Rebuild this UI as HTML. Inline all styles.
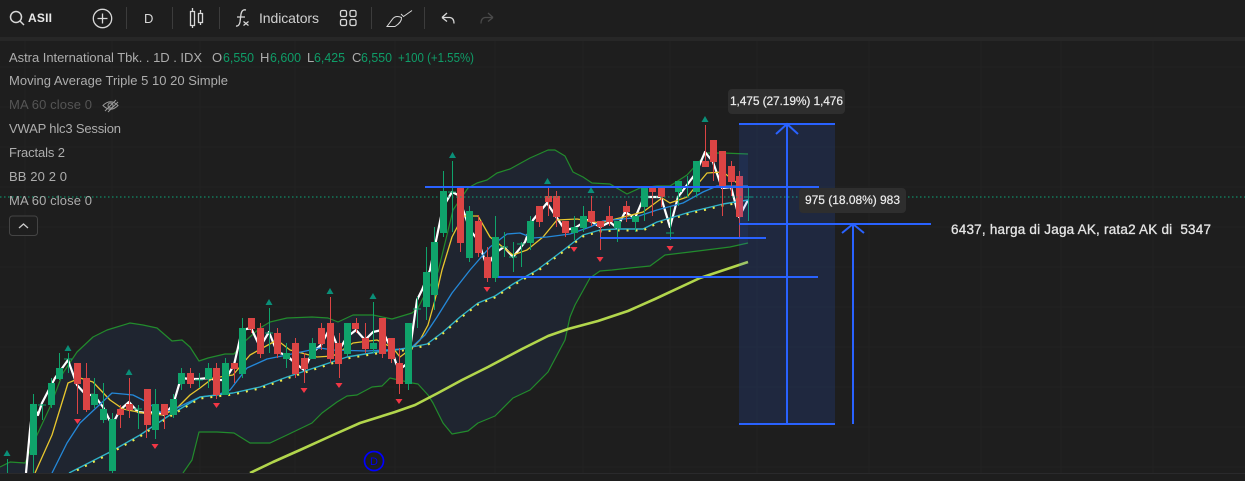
<!DOCTYPE html>
<html><head><meta charset="utf-8"><style>
html,body{margin:0;padding:0;background:#1e1e1e}
body{width:1245px;height:481px;overflow:hidden;position:relative;font-family:"Liberation Sans",sans-serif}
svg{position:absolute;left:0;top:0}
text{font-family:"Liberation Sans",sans-serif;white-space:pre}
.l{font-size:13px;fill:#adadad}
</style></head><body>
<svg width="1245" height="481" viewBox="0 0 1245 481">
<defs><clipPath id="c"><rect x="0" y="42" width="1245" height="431"/></clipPath></defs>
<rect width="1245" height="481" fill="#1e1e1e"/>
<rect y="37" width="1245" height="4" fill="#272727"/>
<path d="M25 41V473M112 41V473M200 41V473M295 41V473M395 41V473M495 41V473M583 41V473M670 41V473M757 41V473M869 41V473M981 41V473M1061 41V473M1153 41V473M0 67H1245M0 107H1245M0 147H1245M0 187H1245M0 227H1245M0 267H1245M0 307H1245M0 347H1245M0 387H1245M0 427H1245M0 467H1245" stroke="#222" fill="none"/>
<rect y="473" width="1245" height="1" fill="#2a2a2c"/>
<g clip-path="url(#c)">
<path fill="#1f2530" d="M0 467L10 462L25 463L37 435L50 407L63 373L77 352L93 337L107 330L130 323L143 325L157 328L172 341L182 340L190 347L199 361L208 358L225 354L234 354L243 343L260 328L270 322L287 318L312 317L328 318L338 322L353 315L373 315L392 319L412 313L418 308L423 298L438 272L453 210L468 188L477 183L487 180L497 173L510 169L530 158L548 150L555 150L565 156L573 172L583 177L592 183L610 184L627 194L640 188L657 186L670 186L687 175L707 153L723 153L748 154L748 243L730 247L690 252L665 255L650 266L630 268L612 270L600 271L590 278L575 305L570 317L565 340L548 372L530 390L513 398L495 416L478 423L468 431L452 434L443 423L433 403L428 395L418 384L412 383L390 378L382 386L372 387L357 395L347 396L337 402L322 413L312 423L287 435L270 443L260 443L250 443L234 433L217 432L199 432L192 460L183 473L0 473Z"/>
<g fill="none" stroke-linejoin="round">
<path stroke="#228b2c" stroke-width="1.2" d="M0 467L10 462L25 463L37 435L50 407L63 373L77 352L93 337L107 330L130 323L143 325L157 328L172 341L182 340L190 347L199 361L208 358L225 354L234 354L243 343L260 328L270 322L287 318L312 317L328 318L338 322L353 315L373 315L392 319L412 313L418 308L423 298L438 272L453 210L468 188L477 183L487 180L497 173L510 169L530 158L548 150L555 150L565 156L573 172L583 177L592 183L610 184L627 194L640 188L657 186L670 186L687 175L707 153L723 153L748 154"/>
<path stroke="#228b2c" stroke-width="1.2" d="M183 473L192 460L199 432L217 432L234 433L250 443L260 443L270 443L287 435L312 423L322 413L337 402L347 396L357 395L372 387L382 386L390 378L412 383L418 384L428 395L433 403L443 423L452 434L468 431L478 423L495 416L513 398L530 390L548 372L565 340L570 317L575 305L590 278L600 271L612 270L630 268L650 266L665 255L690 252L730 247L748 243"/>
<path stroke="#b2d64c" stroke-width="2.6" d="M250 473L273 462L300 450L333 435L360 423L395 412L415 405L438 393L462 380L488 367L522 349L548 336L568 329L598 321L628 311L655 299L700 278L748 262"/>
<path stroke="#fff" stroke-width="2.2" d="M26 473L30 430L33 405L38 415L42 403L55 378L68 360L77 385L86 395L94 395L103 407L112 425L120 410L129 402L138 412L147 413L155 412L164 415L173 405L181 378L190 379L199 379L208 378L216 380L225 380L234 365L242 330L251 328L260 347L269 332L277 352L286 355L295 363L304 370L312 353L321 345L330 328L339 350L347 337L356 330L365 340L373 332L382 330L391 348L396 363L399 370L408 363L417 300L422 290L430 270L443 207L452 192L458 195L470 230L478 240L487 267L495 253L504 247L513 257L525 242L533 220L547 203L557 218L565 230L575 228L587 220L592 222L600 227L610 222L617 228L625 212L635 218L644 197L661 197L670 227L678 197L696 173L705 152L713 162L722 188L731 187L739 217L748 200"/>
<path stroke="#e8c72e" stroke-width="1.3" d="M35 473L52 435L68 383L80 378L93 382L110 400L123 409L143 413L163 415L177 408L190 395L200 388L213 378L233 375L250 355L277 340L290 350L317 357L333 356L353 343L377 340L393 348L400 357L412 348L420 340L428 325L435 300L442 270L452 237L463 216L478 216L490 237L513 255L527 250L543 237L557 220L577 219L600 223L643 212L662 198L670 203L687 197L707 173L723 172L737 183"/>
<path stroke="#2488d8" stroke-width="1.3" d="M52 473L67 443L80 423L112 393L133 395L147 402L160 412L173 410L187 403L200 397L217 395L230 390L247 368L267 359L287 355L320 348L333 350L367 351L400 349L412 347L425 335L437 317L452 293L470 270L490 247L507 234L520 233L533 238L547 237L570 234L590 227L603 221L633 218L657 210L683 203L703 192L717 186L748 186"/>
<path stroke="#2fb2c9" stroke-width="1.4" d="M69 473L110 452L140 435L170 415L200 397L233 393L260 387L287 377L320 366L347 357L377 352L403 349L412 347L427 344L443 332L460 317L478 303L495 296L513 284L537 270L557 255L583 235L600 230L617 229L643 229L657 222L690 212L723 204L748 200"/>
<path stroke="#f2ec4a" stroke-width="2" stroke-dasharray="2 7" transform="translate(0 1.5)" d="M69 473L110 452L140 435L170 415L200 397L233 393L260 387L287 377L320 366L347 357L377 352L403 349L412 347L427 344L443 332L460 317L478 303L495 296L513 284L537 270L557 255L583 235L600 230L617 229L643 229L657 222L690 212L723 204L748 200"/>
</g>
<path stroke="#0fa36b" fill="none" d="M7.5 459V473M33.5 394V473M42.5 404V420M38 405H46M51.5 378V408M59.5 353V380M68.5 353V373M64 359H72M94.5 378V408M103.5 383V423M112.5 413V473M138.5 405V429M134 409H142M155.5 389V439M173.5 394V418M181.5 368V390M199.5 373V388M195 380H203M208.5 363V388M225.5 358V395M242.5 318V378M269.5 308V353M265 333H273M286.5 343V368M312.5 338V359M347.5 323V356M373.5 302V353M408.5 323V390M417.5 297V328M413 309H421M426.5 247V320M434.5 227V310M443.5 171V237M452.5 161V232M448 192H456M469.5 206V262M495.5 216V282M504.5 232V257M500 247H508M513.5 242V272M509 257H517M521.5 242V267M517 244H525M530.5 216V250M574.5 216V240M583.5 206V232M617.5 221V242M635.5 216V232M644.5 186V221M670.5 207V240M666 233H674M678.5 181V206M687.5 176V197M683 187H691M696.5 161V197M748.5 186V221M744 197H753"/>
<path stroke="#db4444" fill="none" d="M77.5 363V414M86.5 363V412M120.5 405V428M129.5 378V418M146.5 389V438M164.5 404V429M190.5 368V388M216.5 363V399M234.5 363V383M251.5 318V333M260.5 323V358M277.5 328V358M295.5 338V378M304.5 353V383M321.5 323V350M330.5 297V363M339.5 333V378M356.5 318V333M365.5 323V353M382.5 318V358M391.5 338V363M399.5 348V394M460.5 186V252M478.5 215V257M487.5 247V282M539.5 206V227M548.5 186V216M556.5 191V227M565.5 221V237M591.5 196V226M600.5 221V250M609.5 206V226M626.5 201V222M652.5 186V216M661.5 186V207M705.5 125V167M713.5 140V181M722.5 151V216M731.5 161V196M739.5 171V237"/>
<path fill="#0fa36b" d="M30 404h7v51h-7zM48 383h7v22h-7zM56 368h7v11h-7zM91 394h7v11h-7zM100 409h7v11h-7zM109 419h7v52h-7zM152 404h7v26h-7zM170 399h7v16h-7zM178 373h7v11h-7zM205 368h7v11h-7zM222 363h7v32h-7zM239 328h7v46h-7zM283 353h7v6h-7zM309 343h7v16h-7zM344 323h7v31h-7zM370 343h7v6h-7zM405 323h7v61h-7zM423 272h7v35h-7zM431 242h7v53h-7zM440 191h7v42h-7zM466 211h7v47h-7zM492 237h7v41h-7zM527 221h7v22h-7zM571 227h7v6h-7zM580 216h7v12h-7zM614 221h7v7h-7zM632 216h7v6h-7zM641 186h7v21h-7zM675 181h7v11h-7zM693 161h7v31h-7z"/>
<path fill="#db4444" d="M74 363h7v21h-7zM83 378h7v32h-7zM117 409h7v6h-7zM126 404h7v6h-7zM144 389h7v36h-7zM161 404h7v11h-7zM187 373h7v11h-7zM213 368h7v27h-7zM231 363h7v6h-7zM248 318h7v11h-7zM257 328h7v26h-7zM274 333h7v21h-7zM292 343h7v31h-7zM301 358h7v11h-7zM318 328h7v16h-7zM327 323h7v36h-7zM335 343h7v21h-7zM352 323h7v6h-7zM362 338h7v11h-7zM379 318h7v36h-7zM388 338h7v21h-7zM396 363h7v21h-7zM457 186h7v57h-7zM475 221h7v32h-7zM484 257h7v21h-7zM536 206h7v16h-7zM545 196h7v6h-7zM553 196h7v21h-7zM562 221h7v12h-7zM588 211h7v11h-7zM597 221h7v6h-7zM606 216h7v6h-7zM623 206h7v6h-7zM649 186h7v6h-7zM658 186h7v11h-7zM702 161h7v6h-7zM710 140h7v22h-7zM719 151h7v36h-7zM728 166h7v16h-7zM736 176h7v41h-7z"/>
<path fill="#0a8f78" d="M3.5 456L7 450L10.500 456zM64.500 351L68 345L71.500 351zM125.500 375L129 369L132.500 375zM265.500 305L269 299L272.500 305zM326.500 294L330 288L333.500 294zM369.500 299L373 293L376.500 299zM449 158L452.500 152L456 158zM544 184L547.500 178L551 184zM587.500 193L591 187L594.500 193zM701.500 122L705 116L708.500 122z"/>
<path fill="#f23645" d="M74 419L77.500 424L81 419zM151.500 444L155 449L158.500 444zM213 403L216.500 408L220 403zM300.500 388L304 393L307.500 388zM335.500 383L339 388L342.500 383zM395.500 399L399 404L402.500 399zM483.500 287L487 292L490.500 287zM570.500 247L574 252L577.500 247zM596.500 257L600 262L603.500 257zM666.500 246L670 251L673.500 246z"/>
</g>
<path stroke="#0ca678" stroke-dasharray="1.5 2.5" d="M0 197H1245" fill="none"/>
<rect x="739" y="124" width="96" height="300" fill="#2962ff" fill-opacity=".15"/>
<path fill="none" stroke="#2962ff" stroke-width="2" d="M425 187H819M600 238H766M498 277H818M739 124H835M739 424H835M739 224H931"/>
<path fill="none" stroke="#2962ff" stroke-width="2" d="M787 424V124M776 134L787 124L798 134M853 424V224M842 233L853 224L864 233"/>
<rect x="728" y="89" width="117" height="25" rx="4" fill="#2e2e2e"/>
<text x="730" y="105" font-size="12" fill="#ececec" stroke="#ececec" stroke-width=".2" textLength="113">1,475 (27.19%) 1,476</text>
<rect x="799" y="188" width="107" height="25" rx="4" fill="#2e2e2e"/>
<text x="805" y="204" font-size="12" fill="#ececec" stroke="#ececec" stroke-width=".2" textLength="95">975 (18.08%) 983</text>
<text x="951" y="234" font-size="13.500" fill="#e4e4e4" stroke="#e4e4e4" stroke-width=".3" textLength="260">6437, harga di Jaga AK, rata2 AK di  5347</text>
<circle cx="374" cy="461" r="9.500" fill="none" stroke="#0000ff" stroke-width="1.700"/>
<text x="374" y="465" font-size="11" fill="#0000ee" text-anchor="middle">D</text>

<text class="l" x="9" y="62" textLength="193">Astra International Tbk. . 1D . IDX</text>
<text class="l" x="212" y="62" textLength="11">O</text><text class="l" x="223" y="62" textLength="31" lengthAdjust="spacingAndGlyphs" style="fill:#0f9d68">6,550</text>
<text class="l" x="260" y="62" textLength="9">H</text><text class="l" x="270" y="62" textLength="31" lengthAdjust="spacingAndGlyphs" style="fill:#0f9d68">6,600</text>
<text class="l" x="307" y="62" textLength="7">L</text><text class="l" x="314" y="62" textLength="31" lengthAdjust="spacingAndGlyphs" style="fill:#0f9d68">6,425</text>
<text class="l" x="352" y="62" textLength="9">C</text><text class="l" x="361" y="62" textLength="31" lengthAdjust="spacingAndGlyphs" style="fill:#0f9d68">6,550</text>
<text class="l" x="398" y="62" textLength="76" lengthAdjust="spacingAndGlyphs" style="fill:#0f9d68">+100 (+1.55%)</text>
<text class="l" x="9" y="85" textLength="219">Moving Average Triple 5 10 20 Simple</text>
<text class="l" x="9" y="109" textLength="83" style="fill:#555">MA 60 close 0</text>
<g fill="none" stroke="#9a9a9a" stroke-width="1"><path d="M103 105.500Q110.500 98 118 105.500Q110.500 113 103 105.500Z"/><circle cx="110.500" cy="105.500" r="2.500"/><path d="M105 111L116 100M108 112L118 102"/></g>
<text class="l" x="9" y="133" textLength="112">VWAP hlc3 Session</text>
<text class="l" x="9" y="157" textLength="56">Fractals 2</text>
<text class="l" x="9" y="181" textLength="58">BB 20 2 0</text>
<text class="l" x="9" y="205" textLength="83">MA 60 close 0</text>
<rect x="9.500" y="216" width="28" height="19.500" rx="3" fill="#1e1e1e" stroke="#444"/>
<path d="M19 228L23.500 224L28 228" fill="none" stroke="#ccc" stroke-width="1.300"/>

<g fill="none" stroke="#d8d8d8" stroke-width="1.300">
<circle cx="16" cy="17" r="5.500" stroke-width="1.500"/><path d="M20 21L24 25" stroke-width="1.500"/>
<circle cx="102.500" cy="18.500" r="9.200"/><path d="M102.500 13.500V23.500M97.500 18.500H107.500"/>
<path d="M126.500 7V29M172.500 7V29M219.500 7V29M371.500 7V29M424.500 7V29" stroke="#3c3c3c" stroke-width="1"/>
<path d="M190.500 11.500h4v14h-4zM192.500 8V11.500M192.500 25.500V28M198.500 13.500h4v9h-4zM200.500 10V13.500M200.500 22.500V25"/>
<path d="M236 26Q239 26.500 240 22L241 14Q242 9 246 10M237 17H245"/><path d="M243.500 21.500L248.500 25.500M248.500 21.500L243.500 25.500" stroke-width="1.200"/>
<rect x="340.500" y="10.500" width="6" height="6" rx="1.500"/><rect x="350" y="10.500" width="6" height="6" rx="1.500"/><rect x="340.500" y="19.500" width="6" height="6" rx="1.500"/><rect x="350" y="19.500" width="6" height="6" rx="1.500"/>
<path d="M387 26.500H395Q402 22 401.500 17.500Q396 15 393 18.500ZM401 14L403.500 16.500L412 10.500" stroke-width="1"/>
<path d="M442 17.500H450Q454 18 454 23.500M442 17.500L447 13M442 17.500L447 21.500"/>
<path d="M493 17.500H485Q481 18 481 23.500M493 17.500L488 13M493 17.500L488 21.500" stroke="#4a4a4a"/>
</g>
<text x="28" y="22" font-size="12" font-weight="bold" fill="#e8e8e8" textLength="24">ASII</text>
<text x="144" y="23" font-size="13" fill="#d8d8d8">D</text>
<text x="259" y="23" font-size="14" fill="#d0d0d0" textLength="60">Indicators</text>
</svg>
</body></html>
